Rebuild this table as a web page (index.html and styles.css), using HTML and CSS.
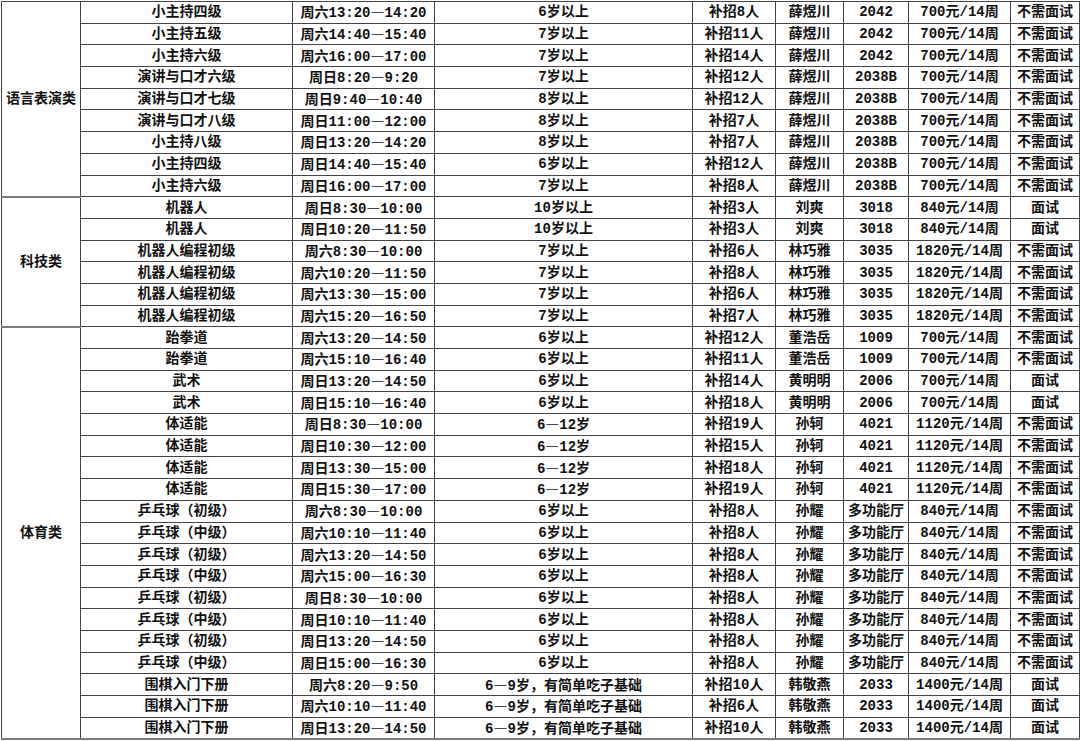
FILE: index.html
```html
<!DOCTYPE html>
<html lang="zh-CN">
<head>
<meta charset="utf-8">
<title>课程补招表</title>
<link rel="stylesheet" href="styles.css">
</head>
<body>
<table class="sched">
<colgroup>
<col class="c-cat"><col class="c-name"><col class="c-time"><col class="c-age"><col class="c-quota"><col class="c-teacher"><col class="c-room"><col class="c-price"><col class="c-iv">
</colgroup>
<tbody>
<tr><td class="cat" rowspan="9">语言表演类</td><td>小主持四级</td><td>周六13:20<span class="d">—</span>14:20</td><td>6岁以上</td><td>补招8人</td><td>薛煜川</td><td>2042</td><td>700元/14周</td><td>不需面试</td></tr>
<tr><td>小主持五级</td><td>周六14:40<span class="d">—</span>15:40</td><td>7岁以上</td><td>补招11人</td><td>薛煜川</td><td>2042</td><td>700元/14周</td><td>不需面试</td></tr>
<tr><td>小主持六级</td><td>周六16:00<span class="d">—</span>17:00</td><td>7岁以上</td><td>补招14人</td><td>薛煜川</td><td>2042</td><td>700元/14周</td><td>不需面试</td></tr>
<tr><td>演讲与口才六级</td><td>周日8:20<span class="d">—</span>9:20</td><td>7岁以上</td><td>补招12人</td><td>薛煜川</td><td>2038B</td><td>700元/14周</td><td>不需面试</td></tr>
<tr><td>演讲与口才七级</td><td>周日9:40<span class="d">—</span>10:40</td><td>8岁以上</td><td>补招12人</td><td>薛煜川</td><td>2038B</td><td>700元/14周</td><td>不需面试</td></tr>
<tr><td>演讲与口才八级</td><td>周日11:00<span class="d">—</span>12:00</td><td>8岁以上</td><td>补招7人</td><td>薛煜川</td><td>2038B</td><td>700元/14周</td><td>不需面试</td></tr>
<tr><td>小主持八级</td><td>周日13:20<span class="d">—</span>14:20</td><td>8岁以上</td><td>补招7人</td><td>薛煜川</td><td>2038B</td><td>700元/14周</td><td>不需面试</td></tr>
<tr><td>小主持四级</td><td>周日14:40<span class="d">—</span>15:40</td><td>6岁以上</td><td>补招12人</td><td>薛煜川</td><td>2038B</td><td>700元/14周</td><td>不需面试</td></tr>
<tr><td>小主持六级</td><td>周日16:00<span class="d">—</span>17:00</td><td>7岁以上</td><td>补招8人</td><td>薛煜川</td><td>2038B</td><td>700元/14周</td><td>不需面试</td></tr>

<tr><td class="cat" rowspan="6">科技类</td><td>机器人</td><td>周日8:30<span class="d">—</span>10:00</td><td>10岁以上</td><td>补招3人</td><td>刘爽</td><td>3018</td><td>840元/14周</td><td>面试</td></tr>
<tr><td>机器人</td><td>周日10:20<span class="d">—</span>11:50</td><td>10岁以上</td><td>补招3人</td><td>刘爽</td><td>3018</td><td>840元/14周</td><td>面试</td></tr>
<tr><td>机器人编程初级</td><td>周六8:30<span class="d">—</span>10:00</td><td>7岁以上</td><td>补招6人</td><td>林巧雅</td><td>3035</td><td>1820元/14周</td><td>不需面试</td></tr>
<tr><td>机器人编程初级</td><td>周六10:20<span class="d">—</span>11:50</td><td>7岁以上</td><td>补招8人</td><td>林巧雅</td><td>3035</td><td>1820元/14周</td><td>不需面试</td></tr>
<tr><td>机器人编程初级</td><td>周六13:30<span class="d">—</span>15:00</td><td>7岁以上</td><td>补招6人</td><td>林巧雅</td><td>3035</td><td>1820元/14周</td><td>不需面试</td></tr>
<tr><td>机器人编程初级</td><td>周六15:20<span class="d">—</span>16:50</td><td>7岁以上</td><td>补招7人</td><td>林巧雅</td><td>3035</td><td>1820元/14周</td><td>不需面试</td></tr>

<tr><td class="cat" rowspan="19">体育类</td><td>跆拳道</td><td>周六13:20<span class="d">—</span>14:50</td><td>6岁以上</td><td>补招12人</td><td>董浩岳</td><td>1009</td><td>700元/14周</td><td>不需面试</td></tr>
<tr><td>跆拳道</td><td>周六15:10<span class="d">—</span>16:40</td><td>6岁以上</td><td>补招11人</td><td>董浩岳</td><td>1009</td><td>700元/14周</td><td>不需面试</td></tr>
<tr><td>武术</td><td>周日13:20<span class="d">—</span>14:50</td><td>6岁以上</td><td>补招14人</td><td>黄明明</td><td>2006</td><td>700元/14周</td><td>面试</td></tr>
<tr><td>武术</td><td>周日15:10<span class="d">—</span>16:40</td><td>6岁以上</td><td>补招18人</td><td>黄明明</td><td>2006</td><td>700元/14周</td><td>面试</td></tr>
<tr><td>体适能</td><td>周日8:30<span class="d">—</span>10:00</td><td>6<span class="d">—</span>12岁</td><td>补招19人</td><td>孙轲</td><td>4021</td><td>1120元/14周</td><td>不需面试</td></tr>
<tr><td>体适能</td><td>周日10:30<span class="d">—</span>12:00</td><td>6<span class="d">—</span>12岁</td><td>补招15人</td><td>孙轲</td><td>4021</td><td>1120元/14周</td><td>不需面试</td></tr>
<tr><td>体适能</td><td>周日13:30<span class="d">—</span>15:00</td><td>6<span class="d">—</span>12岁</td><td>补招18人</td><td>孙轲</td><td>4021</td><td>1120元/14周</td><td>不需面试</td></tr>
<tr><td>体适能</td><td>周日15:30<span class="d">—</span>17:00</td><td>6<span class="d">—</span>12岁</td><td>补招19人</td><td>孙轲</td><td>4021</td><td>1120元/14周</td><td>不需面试</td></tr>
<tr><td>乒乓球（初级）</td><td>周六8:30<span class="d">—</span>10:00</td><td>6岁以上</td><td>补招8人</td><td>孙耀</td><td>多功能厅</td><td>840元/14周</td><td>不需面试</td></tr>
<tr><td>乒乓球（中级）</td><td>周六10:10<span class="d">—</span>11:40</td><td>6岁以上</td><td>补招8人</td><td>孙耀</td><td>多功能厅</td><td>840元/14周</td><td>不需面试</td></tr>
<tr><td>乒乓球（初级）</td><td>周六13:20<span class="d">—</span>14:50</td><td>6岁以上</td><td>补招8人</td><td>孙耀</td><td>多功能厅</td><td>840元/14周</td><td>不需面试</td></tr>
<tr><td>乒乓球（中级）</td><td>周六15:00<span class="d">—</span>16:30</td><td>6岁以上</td><td>补招8人</td><td>孙耀</td><td>多功能厅</td><td>840元/14周</td><td>不需面试</td></tr>
<tr><td>乒乓球（初级）</td><td>周日8:30<span class="d">—</span>10:00</td><td>6岁以上</td><td>补招8人</td><td>孙耀</td><td>多功能厅</td><td>840元/14周</td><td>不需面试</td></tr>
<tr><td>乒乓球（中级）</td><td>周日10:10<span class="d">—</span>11:40</td><td>6岁以上</td><td>补招8人</td><td>孙耀</td><td>多功能厅</td><td>840元/14周</td><td>不需面试</td></tr>
<tr><td>乒乓球（初级）</td><td>周日13:20<span class="d">—</span>14:50</td><td>6岁以上</td><td>补招8人</td><td>孙耀</td><td>多功能厅</td><td>840元/14周</td><td>不需面试</td></tr>
<tr><td>乒乓球（中级）</td><td>周日15:00<span class="d">—</span>16:30</td><td>6岁以上</td><td>补招8人</td><td>孙耀</td><td>多功能厅</td><td>840元/14周</td><td>不需面试</td></tr>
<tr><td>围棋入门下册</td><td>周六8:20<span class="d">—</span>9:50</td><td>6<span class="d">—</span>9岁，有简单吃子基础</td><td>补招10人</td><td>韩敬燕</td><td>2033</td><td>1400元/14周</td><td>面试</td></tr>
<tr><td>围棋入门下册</td><td>周六10:10<span class="d">—</span>11:40</td><td>6<span class="d">—</span>9岁，有简单吃子基础</td><td>补招6人</td><td>韩敬燕</td><td>2033</td><td>1400元/14周</td><td>面试</td></tr>
<tr class="last"><td>围棋入门下册</td><td>周日13:20<span class="d">—</span>14:50</td><td>6<span class="d">—</span>9岁，有简单吃子基础</td><td>补招10人</td><td>韩敬燕</td><td>2033</td><td>1400元/14周</td><td>面试</td></tr>
</tbody>
</table>
</body>
</html>
```

FILE: styles.css
```css
html, body {
  margin: 0;
  padding: 0;
  background: #ffffff;
}

.sched {
  margin: 1px 0 0 1px;
  border-collapse: collapse;
  table-layout: fixed;
  width: 1078px;
  font-family: "Liberation Mono", "Noto Sans CJK SC", monospace;
  font-size: 14px;
  font-weight: bold;
  color: #111111;
}

.c-cat { width: 79px; }
.c-name { width: 212px; }
.c-time { width: 142px; }
.c-age { width: 258px; }
.c-quota { width: 83px; }
.c-teacher { width: 68px; }
.c-room { width: 65px; }
.c-price { width: 102px; }
.c-iv { width: 69px; }

.sched tr {
  height: 21.7px;
}

.sched td {
  border: 1px solid #444444;
  padding: 0;
  text-align: center;
  vertical-align: middle;
  line-height: 18px;
  white-space: nowrap;
  overflow: hidden;
}

.sched .last td {
  border-bottom: 2px solid #7a7a7a;
}

.sched .cat {
  border-bottom: 2px solid #7a7a7a;
}

.sched .cat:first-child {
  border-left: 1px solid #444444;
}

.d {
  font-family: "Noto Sans CJK SC", sans-serif;
}
```
